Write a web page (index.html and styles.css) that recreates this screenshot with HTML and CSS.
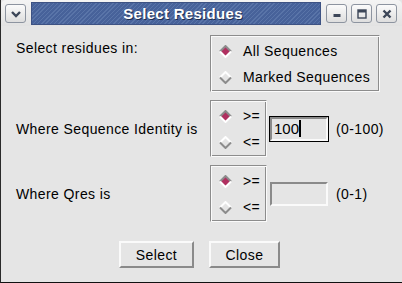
FILE: index.html
```html
<!DOCTYPE html>
<html lang="en">
<head>
  <meta charset="UTF-8">
  <title>Select Residues</title>
  <link rel="stylesheet" href="styles.css">
</head>
<body>
  <div class="window">
    <div class="titlebar">
      <span class="tb-btn">
        <svg width="12" height="8" viewBox="0 0 12 8"><path d="M2 2 L6 6 L10 2" stroke="#3c4658" stroke-width="2.4" fill="none"/></svg>
      </span>
      <div class="title">Select Residues</div>
      <span class="tb-btn">
        <svg width="10" height="10" viewBox="0 0 10 10"><rect x="1.5" y="5" width="7" height="3" fill="#3c4658"/></svg>
      </span>
      <span class="tb-btn">
        <svg width="12" height="12" viewBox="0 0 12 12"><rect x="2" y="2" width="8" height="8" stroke="#3c4658" stroke-width="1.4" fill="none"/><rect x="2" y="2" width="8" height="2.5" fill="#3c4658"/></svg>
      </span>
      <span class="tb-btn">
        <svg width="12" height="12" viewBox="0 0 12 12"><path d="M2.5 2.5 L9.5 9.5 M9.5 2.5 L2.5 9.5" stroke="#3c4658" stroke-width="2.4"/></svg>
      </span>
    </div>

    <div class="content">
      <div class="form">
        <div class="lbl lbl-top">Select residues in:</div>
        <div class="frame frame-wide">
          <div class="radio">
            <svg class="dia" width="13" height="13" viewBox="0 0 13 13"><path d="M6.5 1 L12 6.5 L6.5 12 L1 6.5Z" fill="#b03060"/><path d="M1 6.5 L6.5 1 L12 6.5" stroke="#8c8c8c" stroke-width="2" fill="none"/><path d="M1 6.5 L6.5 12 L12 6.5" stroke="#fff" stroke-width="2" fill="none"/></svg>
            All Sequences
          </div>
          <div class="radio">
            <svg class="dia" width="13" height="13" viewBox="0 0 13 13"><path d="M1 6.5 L6.5 1 L12 6.5" stroke="#fff" stroke-width="2" fill="none"/><path d="M1 6.5 L6.5 12 L12 6.5" stroke="#8c8c8c" stroke-width="2" fill="none"/></svg>
            Marked Sequences
          </div>
        </div>

        <div class="lbl">Where Sequence Identity is</div>
        <div class="frame">
          <div class="radio">
            <svg class="dia" width="13" height="13" viewBox="0 0 13 13"><path d="M6.5 1 L12 6.5 L6.5 12 L1 6.5Z" fill="#b03060"/><path d="M1 6.5 L6.5 1 L12 6.5" stroke="#8c8c8c" stroke-width="2" fill="none"/><path d="M1 6.5 L6.5 12 L12 6.5" stroke="#fff" stroke-width="2" fill="none"/></svg>
            &gt;=
          </div>
          <div class="radio">
            <svg class="dia" width="13" height="13" viewBox="0 0 13 13"><path d="M1 6.5 L6.5 1 L12 6.5" stroke="#fff" stroke-width="2" fill="none"/><path d="M1 6.5 L6.5 12 L12 6.5" stroke="#8c8c8c" stroke-width="2" fill="none"/></svg>
            &lt;=
          </div>
        </div>
        <div class="entry focused"><div class="entry-in">100<span class="cursor"></span></div></div>
        <div class="range">(0-100)</div>

        <div class="lbl">Where Qres is</div>
        <div class="frame">
          <div class="radio">
            <svg class="dia" width="13" height="13" viewBox="0 0 13 13"><path d="M6.5 1 L12 6.5 L6.5 12 L1 6.5Z" fill="#b03060"/><path d="M1 6.5 L6.5 1 L12 6.5" stroke="#8c8c8c" stroke-width="2" fill="none"/><path d="M1 6.5 L6.5 12 L12 6.5" stroke="#fff" stroke-width="2" fill="none"/></svg>
            &gt;=
          </div>
          <div class="radio">
            <svg class="dia" width="13" height="13" viewBox="0 0 13 13"><path d="M1 6.5 L6.5 1 L12 6.5" stroke="#fff" stroke-width="2" fill="none"/><path d="M1 6.5 L6.5 12 L12 6.5" stroke="#8c8c8c" stroke-width="2" fill="none"/></svg>
            &lt;=
          </div>
        </div>
        <div class="entry"><div class="entry-in"></div></div>
        <div class="range">(0-1)</div>
      </div>

      <div class="buttons">
        <div class="btn btn-select">Select</div>
        <div class="btn btn-close">Close</div>
      </div>
    </div>
  </div>
</body>
</html>
```

FILE: styles.css
```css
* {
  box-sizing: border-box;
}

body {
  margin: 0;
  background-color: #e5e5e5;
  font-family: 'Liberation Sans', Arial, sans-serif;
  font-size: 14px;
  color: #000;
}

.window {
  height: 283px;
  border-left: 1px solid #2a2a2a;
  border-bottom: 1px solid #111;
  background-color: #e5e5e5;
  display: flex;
  flex-direction: column;
}

.titlebar {
  height: 26px;
  display: flex;
  align-items: center;
  padding: 1px 5px 0 4px;
  background: linear-gradient(#f4f4f4, #e2e2e2);
  border-radius: 5px 5px 0 0;
}

.tb-btn {
  width: 21px;
  height: 19px;
  border: 1px solid #8d94a0;
  border-radius: 3px;
  background: linear-gradient(#fbfbfb, #dedede);
  display: flex;
  align-items: center;
  justify-content: center;
  margin-left: 4px;
}

.tb-btn:first-child {
  margin-left: 0;
}

.title {
  flex: 1;
  height: 23px;
  margin: 0 1px 0 5px;
  background: repeating-linear-gradient(135deg, #5974a8 0 1px, #47629a 1px 3px);
  border: 1px solid #3d5283;
  color: #fff;
  font-weight: bold;
  font-size: 15px;
  letter-spacing: 0.3px;
  text-align: center;
  line-height: 21px;
  padding-left: 14px;
  text-shadow: 1px 1px 0 #1e2d4e;
}

.content {
  flex: 1;
  padding: 9px 0 0 15px;
}

.form {
  display: grid;
  grid-template-columns: 194px 59px 67px auto;
  row-gap: 8px;
  align-items: center;
}

.lbl, .range, .radio, .btn {
  letter-spacing: 0.4px;
}

.lbl-top {
  align-self: start;
  padding-top: 5px;
}

/* groove: dark outer line, light inner line on top/left */
.frame {
  width: 57px;
  border: 1px solid;
  border-color: #8c8c8c #fafafa #fafafa #8c8c8c;
  box-shadow: inset 1px 1px 0 #fafafa, inset -1px -1px 0 #8c8c8c;
  padding: 2px 0 1px;
}

.frame-wide {
  grid-column: 2 / span 3;
  width: 170px;
}

.radio {
  height: 26px;
  display: flex;
  align-items: center;
  padding-left: 8px;
}

.dia {
  margin-right: 11px;
  flex-shrink: 0;
}

.entry {
  width: 60px;
  height: 26px;
  border: 1px solid #e5e5e5;
}

.entry.focused {
  border-color: #000;
}

.entry-in {
  height: 100%;
  border: 2px solid;
  border-color: #8a8a8a #fafafa #fafafa #8a8a8a;
  padding-left: 2px;
  font-size: 15px;
  display: flex;
  align-items: center;
}

.cursor {
  display: inline-block;
  width: 2px;
  height: 17px;
  background-color: #000;
}

.buttons {
  display: flex;
  justify-content: center;
  gap: 15px;
  margin-top: 19px;
  padding-right: 19px;
}

.btn {
  height: 27px;
  border: 2px solid;
  border-color: #fafafa #8a8a8a #8a8a8a #fafafa;
  display: flex;
  align-items: center;
  justify-content: center;
}

.btn-select {
  width: 75px;
}

.btn-close {
  width: 71px;
}
```
